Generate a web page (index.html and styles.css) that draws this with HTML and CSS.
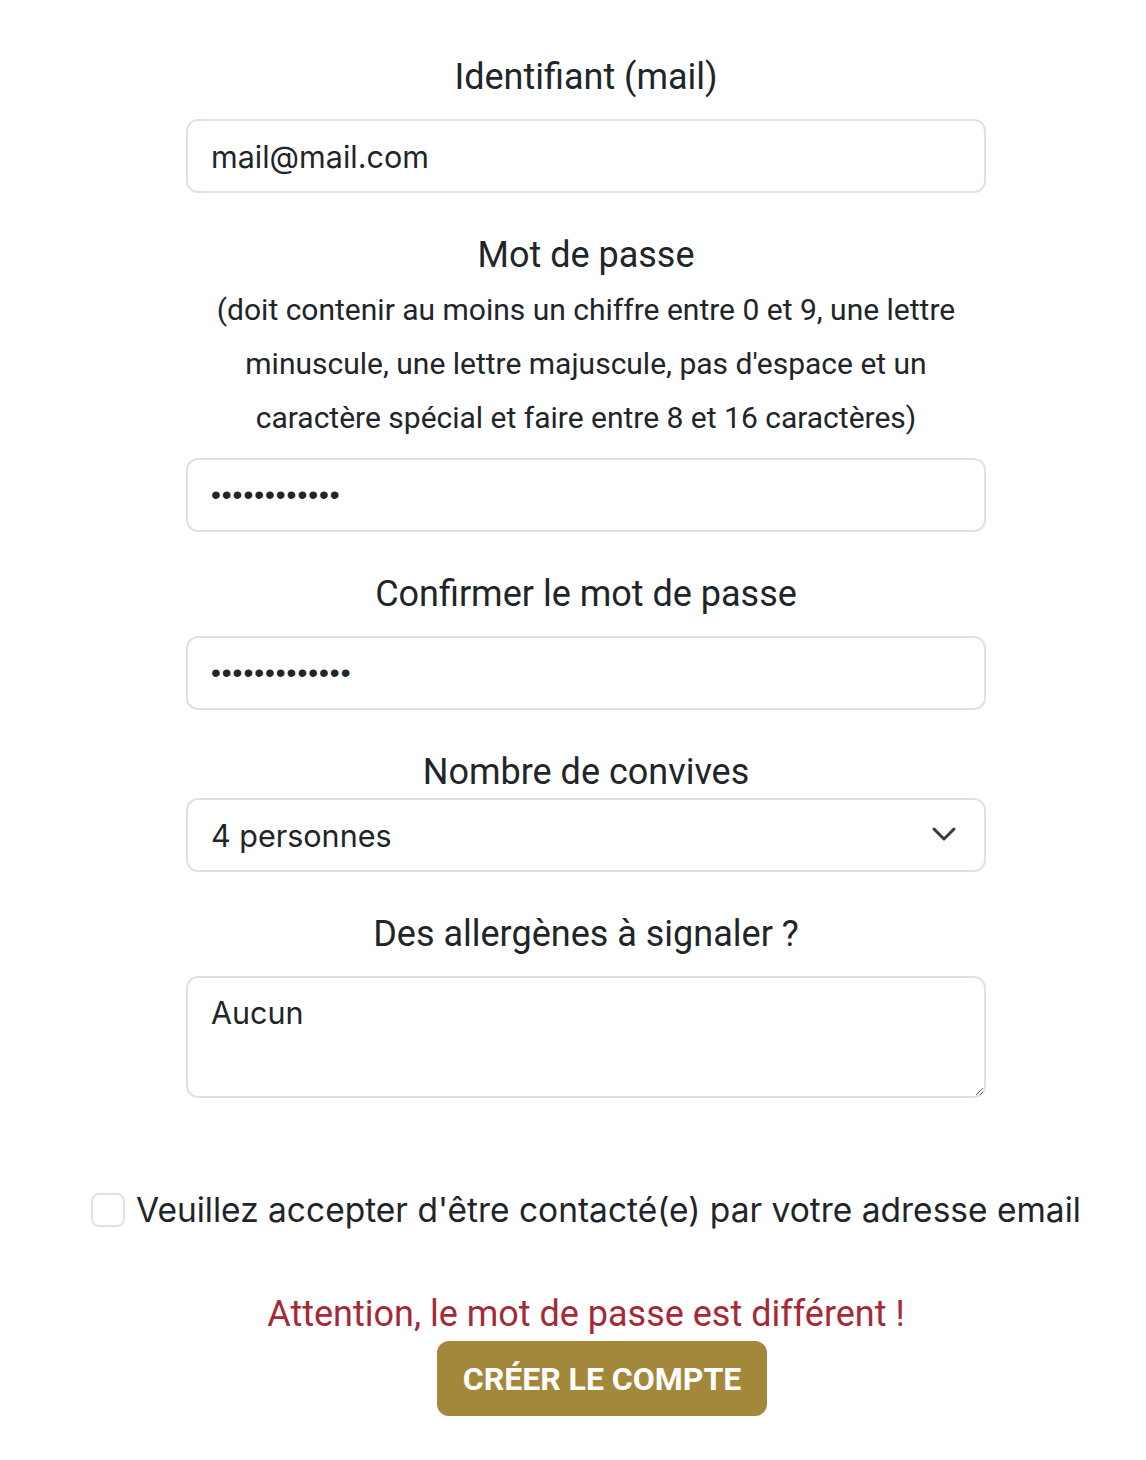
FILE: index.html
```html
<!DOCTYPE html>
<html lang="fr">
<head>
<meta charset="utf-8">
<title>Créer un compte</title>
<link rel="stylesheet" href="styles.css">
</head>
<body>
<main class="page">
  <form class="form">
    <label class="label" for="mail">Identifiant (mail)</label>
    <input class="field" id="mail" type="email" value="mail@mail.com">

    <label class="label label-tight" for="pwd">Mot de passe</label>
    <p class="hint">(doit contenir au moins un chiffre entre 0 et 9, une lettre minuscule, une lettre majuscule, pas d'espace et un caractère spécial et faire entre 8 et 16 caractères)</p>
    <input class="field" id="pwd" type="password" value="aaaaaaaaaaaa">

    <label class="label" for="pwd2">Confirmer le mot de passe</label>
    <input class="field" id="pwd2" type="password" value="aaaaaaaaaaaaa">

    <label class="label label-select" for="guests">Nombre de convives</label>
    <div class="select-wrap">
      <select class="field select" id="guests">
        <option>4 personnes</option>
      </select>
      <svg class="chevron" width="24" height="14" viewBox="0 0 24 14" aria-hidden="true"><path d="M2 2l10 10L22 2" fill="none" stroke="#343a40" stroke-width="3" stroke-linecap="round" stroke-linejoin="round"/></svg>
    </div>

    <label class="label" for="allergy">Des allergènes à signaler ?</label>
    <textarea class="field area" id="allergy">Aucun</textarea>
  </form>

  <div class="check-row">
    <span class="checkbox"></span>
    <span class="check-text">Veuillez accepter d'être contacté(e) par votre adresse email</span>
  </div>

  <p class="error">Attention, le mot de passe est différent !</p>
  <div class="actions">
    <button class="btn" type="button">Créer le compte</button>
  </div>
</main>
</body>
</html>
```

FILE: styles.css
```css
* { box-sizing: border-box; }

html, body {
  margin: 0;
  padding: 0;
  background: #ffffff;
}

body {
  color: #212529;
  font-family: Roboto, "Liberation Sans", sans-serif;
}

.page {
  width: 1146px;
  padding: 53px 0 0 26px;
}

.form {
  width: 800px;
  margin: 0 auto;
  display: flex;
  flex-direction: column;
  align-items: stretch;
}

.label {
  display: block;
  text-align: center;
  font-size: 36px;
  line-height: 44px;
  height: 44px;
  padding-top: 2px;
  margin: 0 0 22px;
  color: #212529;
}

.label ~ .label { margin-top: 38px; }

.label-tight { margin-bottom: 8px; }
.label-select { margin-bottom: 6px; }

.hint {
  margin: 0 0 13px;
  text-align: center;
  font-size: 30px;
  line-height: 54px;
  padding: 0 20px;
}

.field {
  display: block;
  width: 800px;
  height: 74px;
  margin: 0;
  padding: 0 23px;
  border: 2px solid #dee2e6;
  border-radius: 12px;
  background: #ffffff;
  color: #212529;
  font-family: Inter, "Liberation Sans", sans-serif;
  font-size: 30.5px;
  outline: none;
}

.field[type="password"] {
  font-family: "Liberation Sans", sans-serif;
  font-size: 28px;
  letter-spacing: 1px;
}

.select-wrap { position: relative; }

.select {
  appearance: none;
  -webkit-appearance: none;
}

.chevron {
  position: absolute;
  right: 30px;
  top: 29px;
  pointer-events: none;
}

.area {
  height: 122px;
  padding-top: 14px;
  line-height: 42px;
  resize: vertical;
}

.check-row {
  width: 990px;
  margin: 94px auto 0;
  display: flex;
  align-items: center;
  gap: 11px;
  height: 36px;
}

.checkbox {
  width: 34px;
  height: 34px;
  flex: none;
  border: 2px solid #dee2e6;
  border-radius: 8px;
  background: #fff;
}

.check-text {
  font-family: Inter, "Liberation Sans", sans-serif;
  font-size: 33.5px;
  white-space: nowrap;
  color: #212529;
}

.error {
  margin: 64px 0 0;
  text-align: center;
  color: #a52a36;
  font-size: 36px;
  line-height: 44px;
}

.actions {
  display: flex;
  justify-content: center;
  padding-left: 32px;
  margin-top: 5px;
}

.btn {
  width: 330px;
  height: 75px;
  border: none;
  border-radius: 12px;
  background: #a3883b;
  color: #ffffff;
  font-family: Roboto, "Liberation Sans", sans-serif;
  font-weight: 700;
  font-size: 32px;
  text-transform: uppercase;
  letter-spacing: 0;
  cursor: pointer;
}
```
